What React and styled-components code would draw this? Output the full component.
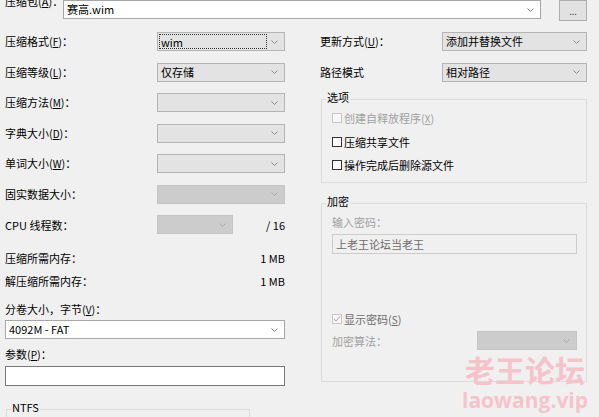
import styled, { createGlobalStyle } from "styled-components";

const GlobalStyle = createGlobalStyle`
  html, body {
    margin: 0;
    padding: 0;
    background: #f0f0f0;
  }
  body {
    font-family: "Noto Sans CJK SC", "Noto Sans", sans-serif;
    font-size: 11px;
    color: #000;
  }
  * { box-sizing: border-box; }
`;

const Dialog = styled.div`
  position: relative;
  width: 599px;
  height: 417px;
  overflow: hidden;
  padding: 0 12px 0 5px;
`;

const TopRow = styled.div`
  display: flex;
  align-items: flex-start;
  height: 21px;
`;

const ArchiveLabel = styled.div`
  width: 58px;
  margin-top: -7px;
  line-height: 16px;
  white-space: nowrap;
`;

const BrowseButton = styled.div`
  width: 28px;
  height: 21px;
  margin-left: 18px;
  background: #e1e1e1;
  border: 1px solid #adadad;
  display: flex;
  align-items: flex-end;
  justify-content: center;
  font-size: 9px;
  line-height: 12px;
  color: #444;
  padding-bottom: 2px;
`;

const Columns = styled.div`
  display: flex;
`;

const LeftColumn = styled.div`
  width: 280px;
  padding-top: 11px;
  display: flex;
  flex-direction: column;
`;

const RightColumn = styled.div`
  width: 267px;
  margin-left: 35px;
  padding-top: 11px;
  display: flex;
  flex-direction: column;
`;

const FieldRow = styled.div`
  display: flex;
  align-items: center;
  justify-content: space-between;
  height: 19px;
  flex-shrink: 0;
  margin-top: ${(p) => p.$gap || 0}px;
  & + & {
    margin-top: 11.5px;
  }
`;

const Label = styled.span`
  white-space: nowrap;
  line-height: 16px;
  width: ${(p) => p.$width || "auto"};
  flex: ${(p) => (p.$grow ? 1 : "none")};
  text-align: ${(p) => (p.$right ? "right" : "left")};
  color: ${(p) => (p.$disabled ? "#a0a0a0" : "#000")};
  u {
    font-size: 10px;
  }
`;

const TextLine = styled.div`
  display: flex;
  align-items: center;
  justify-content: space-between;
  height: 16px;
  line-height: 16px;
  margin-top: ${(p) => p.$gap || 0}px;
  color: ${(p) => (p.$disabled ? "#a0a0a0" : "#000")};
  white-space: nowrap;
`;

const comboColors = {
  edit: { bg: "#ffffff", border: "#a6a6a6", arrow: "#7a7a7a" },
  list: { bg: "#e3e3e3", border: "#b4b4b4", arrow: "#8a8a8a" },
  disabled: { bg: "#cccccc", border: "#c4c4c4", arrow: "#a8a8a8" },
};

const ComboBox = styled.div`
  position: relative;
  display: flex;
  align-items: center;
  width: ${(p) => p.$width || "100%"};
  height: ${(p) => p.$height || 19}px;
  margin-top: ${(p) => p.$gap || 0}px;
  flex-shrink: 0;
  background: ${(p) => comboColors[p.$variant].bg};
  border: 1px solid ${(p) => comboColors[p.$variant].border};
  padding: 0 20px 0 3px;
`;

const ComboText = styled.span`
  white-space: nowrap;
  line-height: 15px;
  flex: 1;
  ${(p) =>
    p.$focus &&
    `
    border: 1px dotted #333;
    margin-left: -2px;
    margin-right: -3px;
    padding-left: 1px;
    height: 15px;
  `}
`;

const ChevronWrap = styled.span`
  position: absolute;
  right: 6px;
  top: 50%;
  margin-top: -2px;
  display: flex;
`;

const TextInput = styled.div`
  width: 100%;
  height: 20px;
  margin-top: ${(p) => p.$gap || 0}px;
  background: ${(p) => (p.$disabled ? "#f0f0f0" : "#fff")};
  border: 1px solid ${(p) => (p.$disabled ? "#cccccc" : "#7a7a7a")};
  color: ${(p) => (p.$disabled ? "#6d6d6d" : "#000")};
  padding-left: 3px;
  line-height: 18px;
  white-space: nowrap;
`;

const PathInput = styled(ComboBox)`
  margin-top: 0;
`;

const Group = styled.fieldset`
  margin: ${(p) => p.$gap || 0}px 0 0 1px;
  border: 1px solid #dcdcdc;
  padding: 1px 9px ${(p) => p.$bottom || 9}px 10px;
  min-width: 0;
  flex-shrink: 0;
  display: flex;
  flex-direction: column;
`;

const Legend = styled.legend`
  line-height: 16px;
  padding: 0 1px 4px;
  margin-left: -6px;
`;

const CheckRow = styled.div`
  display: flex;
  align-items: center;
  height: 16px;
  margin-top: ${(p) => p.$gap || 0}px;
  color: ${(p) => p.$color || "#000"};
  white-space: nowrap;
  u {
    font-size: 10px;
  }
`;

const Box = styled.span`
  width: 10px;
  height: 10px;
  margin-right: 2px;
  border: 1px solid ${(p) => (p.$disabled ? "#c8c8c8" : "#333")};
  background: ${(p) => (p.$disabled ? "#f7f7f7" : "#fff")};
  display: flex;
  align-items: center;
  justify-content: center;
`;

const NtfsGroup = styled(Group)`
  margin-top: 13px;
  width: 244px;
  height: 40px;
`;

const Watermark = styled.div`
  position: absolute;
  left: 462px;
  top: 352px;
  color: #f7c3ca;
  font-weight: 700;
  pointer-events: none;
  text-align: center;
`;

const WatermarkCn = styled.div`
  font-size: 30px;
  line-height: 34px;
`;

const WatermarkEn = styled.div`
  font-family: "Open Sans", "Noto Sans", sans-serif;
  font-size: 21px;
  line-height: 22px;
  margin-top: 3px;
`;

const Chevron = ({ color }) => (
  <ChevronWrap>
    <svg width="7" height="4" viewBox="0 0 7 4">
      <polyline points="0.5,0.5 3.5,3.5 6.5,0.5" fill="none" stroke={color} strokeWidth="1" />
    </svg>
  </ChevronWrap>
);

const Combo = ({ variant = "list", width, height, gap, focus, children }) => (
  <ComboBox $variant={variant} $width={width} $height={height} $gap={gap}>
    <ComboText $focus={focus}>{children}</ComboText>
    <Chevron color={comboColors[variant].arrow} />
  </ComboBox>
);

const Check = ({ checked, disabled, color, gap, children }) => (
  <CheckRow $color={color} $gap={gap}>
    <Box $disabled={disabled}>
      {checked && (
        <svg width="8" height="8" viewBox="0 0 8 8">
          <polyline points="1,4 3,6 7,1.5" fill="none" stroke="#a0a0a0" strokeWidth="1" />
        </svg>
      )}
    </Box>
    {children}
  </CheckRow>
);

const Acc = ({ l }) => (
  <>
    (<u>{l}</u>)
  </>
);

export default function App() {
  return (
    <>
      <GlobalStyle />
      <Dialog>
        <TopRow>
          <ArchiveLabel>
            压缩包<Acc l="A" />：
          </ArchiveLabel>
          <PathInput $variant="edit" $width="478px">
            <ComboText>赛高.wim</ComboText>
            <Chevron color="#7a7a7a" />
          </PathInput>
          <BrowseButton>...</BrowseButton>
        </TopRow>

        <Columns>
          <LeftColumn>
            <FieldRow>
              <Label>
                压缩格式<Acc l="F" />：
              </Label>
              <Combo width="128px" focus>
                wim
              </Combo>
            </FieldRow>
            <FieldRow>
              <Label>
                压缩等级<Acc l="L" />：
              </Label>
              <Combo width="128px">仅存储</Combo>
            </FieldRow>
            <FieldRow>
              <Label>
                压缩方法<Acc l="M" />：
              </Label>
              <Combo width="128px" />
            </FieldRow>
            <FieldRow>
              <Label>
                字典大小<Acc l="D" />：
              </Label>
              <Combo width="128px" />
            </FieldRow>
            <FieldRow>
              <Label>
                单词大小<Acc l="W" />：
              </Label>
              <Combo width="128px" />
            </FieldRow>
            <FieldRow>
              <Label>固实数据大小：</Label>
              <Combo width="128px" variant="disabled" />
            </FieldRow>
            <FieldRow>
              <Label $width="152px">CPU 线程数：</Label>
              <Combo width="76px" variant="disabled" />
              <Label $grow $right>
                / 16
              </Label>
            </FieldRow>

            <TextLine $gap={16}>
              <span>压缩所需内存：</span>
              <span>1 MB</span>
            </TextLine>
            <TextLine $gap={7}>
              <span>解压缩所需内存：</span>
              <span>1 MB</span>
            </TextLine>

            <TextLine $gap={12}>
              <Label>
                分卷大小，字节<Acc l="V" />：
              </Label>
            </TextLine>
            <Combo variant="edit" gap={3}>
              4092M - FAT
            </Combo>

            <TextLine $gap={7}>
              <Label>
                参数<Acc l="P" />：
              </Label>
            </TextLine>
            <TextInput $gap={4} />

            <NtfsGroup>
              <Legend>NTFS</Legend>
            </NtfsGroup>
          </LeftColumn>

          <RightColumn>
            <FieldRow>
              <Label>
                更新方式<Acc l="U" />：
              </Label>
              <Combo width="145px">添加并替换文件</Combo>
            </FieldRow>
            <FieldRow>
              <Label>路径模式</Label>
              <Combo width="145px">相对路径</Combo>
            </FieldRow>

            <Group $gap={7.5}>
              <Legend>选项</Legend>
              <Check disabled color="#a0a0a0">
                创建自释放程序<Acc l="X" />
              </Check>
              <Check gap={7.5}>压缩共享文件</Check>
              <Check gap={7.5}>操作完成后删除源文件</Check>
            </Group>

            <Group $gap={10} $bottom={31}>
              <Legend>加密</Legend>
              <TextLine $disabled>输入密码：</TextLine>
              <TextInput $disabled $gap={4}>
                上老王论坛当老王
              </TextInput>
              <Check checked disabled color="#6d6d6d" gap={57}>
                显示密码<Acc l="S" />
              </Check>
              <FieldRow $gap={4}>
                <Label $disabled>加密算法：</Label>
                <Combo width="100px" variant="disabled" />
              </FieldRow>
            </Group>
          </RightColumn>
        </Columns>

        <Watermark>
          <WatermarkCn>老王论坛</WatermarkCn>
          <WatermarkEn>laowang.vip</WatermarkEn>
        </Watermark>
      </Dialog>
    </>
  );
}
